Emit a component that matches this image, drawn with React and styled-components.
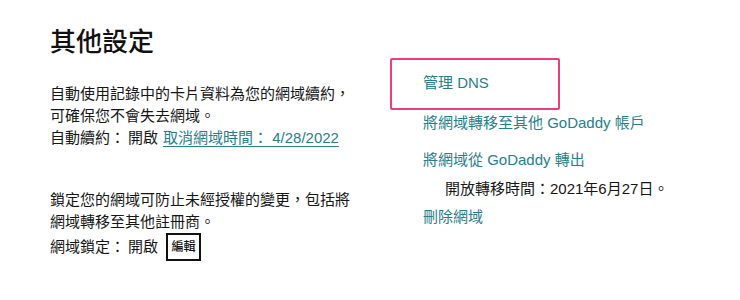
import React from "react";
import styled, { createGlobalStyle } from "styled-components";

const Global = createGlobalStyle`
  html, body { margin: 0; padding: 0; background: #ffffff; }
  body {
    font-family: "Liberation Sans", "Noto Sans CJK TC", sans-serif;
    color: #161616;
    -webkit-font-smoothing: antialiased;
  }
`;

const Page = styled.div`
  width: 740px;
  height: 300px;
  box-sizing: border-box;
  padding: 26px 0 0 50px;
  display: grid;
  grid-template-columns: 373px 1fr;
  overflow: hidden;
`;

const LeftColumn = styled.section`
  display: flex;
  flex-direction: column;
`;

const Title = styled.h2`
  margin: 0;
  font-size: 26px;
  line-height: 32px;
  font-weight: 500;
  color: #111;
`;

const Block = styled.div`
  width: 310px;
  margin-top: ${(p) => p.$gap}px;
  font-size: 15px;
  line-height: 22px;
`;

const Para = styled.p`
  margin: 0;
`;

const StatusRow = styled.div`
  display: flex;
  align-items: center;
  white-space: nowrap;
  min-height: 22px;
`;

const Label = styled.span`
  display: inline-block;
  min-width: 78px;
`;

const Value = styled.span`
  margin-right: ${(p) => p.$space || 5}px;
`;

const InlineLink = styled.a`
  color: #27808a;
  text-decoration: underline;
  text-underline-offset: 3px;
  text-decoration-thickness: 1px;
  cursor: pointer;
`;

const EditButton = styled.button`
  box-sizing: border-box;
  width: 35px;
  height: 28px;
  padding: 0;
  border: 2px solid #111;
  background: #fff;
  font-family: "Liberation Sans", "Noto Sans CJK TC", sans-serif;
  font-size: 12px;
  font-weight: 500;
  color: #111;
  line-height: 1;
  cursor: pointer;
`;

const RightColumn = styled.nav`
  display: flex;
  flex-direction: column;
  align-items: flex-start;
  padding-top: 46px;
  font-size: 15px;
  line-height: 22px;
`;

const ActionLink = styled.a`
  position: relative;
  display: block;
  color: #27808a;
  text-decoration: none;
  cursor: pointer;
  margin-top: ${(p) => p.$gap || 0}px;
  white-space: nowrap;

  ${(p) =>
    p.$highlight &&
    `
    &::after {
      content: "";
      position: absolute;
      left: -33px;
      top: -14px;
      width: 170px;
      height: 52px;
      box-sizing: border-box;
      border: 2px solid #ee3d78;
      border-radius: 2px;
      pointer-events: none;
    }
  `}
`;

const Note = styled.div`
  margin-top: ${(p) => p.$gap}px;
  padding-left: 22px;
  color: #161616;
  white-space: nowrap;
`;

export default function App() {
  return (
    <>
      <Global />
      <Page>
        <LeftColumn>
          <Title>其他設定</Title>
          <Block $gap={25}>
            <Para>自動使用記錄中的卡片資料為您的網域續約，可確保您不會失去網域。</Para>
            <StatusRow>
              <Label>自動續約：</Label>
              <Value>開啟</Value>
              <InlineLink>取消網域時間： 4/28/2022</InlineLink>
            </StatusRow>
          </Block>
          <Block $gap={40}>
            <Para>鎖定您的網域可防止未經授權的變更，包括將網域轉移至其他註冊商。</Para>
            <StatusRow>
              <Label>網域鎖定：</Label>
              <Value $space={8}>開啟</Value>
              <EditButton>編輯</EditButton>
            </StatusRow>
          </Block>
        </LeftColumn>
        <RightColumn>
          <ActionLink $highlight>管理 DNS</ActionLink>
          <ActionLink $gap={18}>將網域轉移至其他 GoDaddy 帳戶</ActionLink>
          <ActionLink $gap={15}>將網域從 GoDaddy 轉出</ActionLink>
          <Note $gap={7}>開放轉移時間：2021年6月27日。</Note>
          <ActionLink $gap={6}>刪除網域</ActionLink>
        </RightColumn>
      </Page>
    </>
  );
}
